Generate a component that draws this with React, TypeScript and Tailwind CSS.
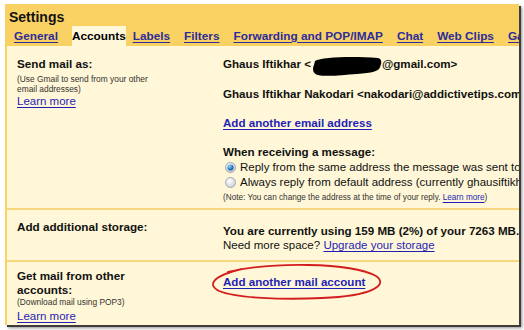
import React from "react";

function Radio({ checked }: { checked?: boolean }) {
  return (
    <svg width="11" height="11" viewBox="0 0 11 11" className="ml-[2px] mr-[4px] shrink-0">
      <defs>
        <radialGradient id={checked ? "rgc" : "rgu"} cx="0.4" cy="0.35" r="0.7">
          <stop offset="0" stopColor="#ffffff" />
          <stop offset="1" stopColor="#c9cdd2" />
        </radialGradient>
        <radialGradient id="dot" cx="0.35" cy="0.3" r="0.75">
          <stop offset="0" stopColor="#9fd2f5" />
          <stop offset="0.6" stopColor="#2f7fc6" />
          <stop offset="1" stopColor="#1a4f8c" />
        </radialGradient>
      </defs>
      <circle cx="5.5" cy="5.5" r="5" fill={`url(#${checked ? "rgc" : "rgu"})`} stroke="#98a3b0" strokeWidth="0.9" />
      {checked && <circle cx="5.5" cy="5.5" r="3.1" fill="url(#dot)" />}
    </svg>
  );
}

function Blob() {
  return (
    <svg width="70" height="14" viewBox="0 0 70 14" className="inline-block overflow-visible align-top ml-[1px]">
      <path
        d="M3 4 C10 0, 40 -1, 66 1 C70 2, 70 6, 68 10 C67 14, 60 16, 45 17 C30 18, 15 20, 6 18 C1 17, 0 12, 2 8 Z"
        fill="#000"
      />
    </svg>
  );
}

export default function App() {
  const tab = "px-[7px] text-[#2c2c9c] underline underline-offset-[2px]";
  const link = "text-[#1f1fb8] underline underline-offset-[2px]";
  return (
    <div className="relative w-[524px] h-[330px] bg-white overflow-hidden font-['Liberation_Sans',Arial,sans-serif] text-[#111] pt-[4px] pl-[5px]">
      <div className="w-[514px] h-[321px] bg-[#fad163] flex flex-col overflow-hidden shadow-[2px_2px_0_#3c3c3c,3px_3px_3px_rgba(0,0,0,0.45)]">
        <div className="pl-[4px] pt-[5px] h-[22px] text-[14px] leading-[16px] font-bold">Settings</div>
        <div className="flex h-[20px] text-[11.8px] leading-[20px] font-bold whitespace-nowrap pl-[2px]">
          <span className={tab}>General</span>
          <span className="ml-[7px] w-[64px] bg-[#fff7d7] text-center text-black">Accounts</span>
          <span className={tab}>Labels</span>
          <span className={tab}>Filters</span>
          <span className={tab}>Forwarding and POP/IMAP</span>
          <span className={tab}>Chat</span>
          <span className={tab}>Web Clips</span>
          <span className={tab}>Gadgets</span>
        </div>
        <div className="flex-1 ml-[2px] bg-[#fff7d7] flex flex-col">
          {/* Row 1 */}
          <div className="h-[164px] flex border-b-2 border-[#f7d67e]">
            <div className="w-[216px] shrink-0 pl-[10px] pt-[11px]">
              <div className="text-[11.7px] leading-[14px] font-bold">Send mail as:</div>
              <div className="mt-[3px] text-[8.4px] leading-[10px] text-[#333] whitespace-nowrap">
                (Use Gmail to send from your other
                <br />
                email addresses)
              </div>
              <div className="text-[11.5px] leading-[14px]">
                <span className={link}>Learn more</span>
              </div>
            </div>
            <div className="flex-1 min-w-0 pt-[11px] whitespace-nowrap">
              <div className="text-[11.6px] leading-[14px] font-bold">
                Ghaus Iftikhar &lt;
                <Blob />
                @gmail.com&gt;
              </div>
              <div className="mt-[16px] text-[11.6px] leading-[14px] font-bold">
                Ghaus Iftikhar Nakodari &lt;nakodari@addictivetips.com&gt;
              </div>
              <div className="mt-[15px] text-[11.6px] leading-[14px] font-bold">
                <span className={link}>Add another email address</span>
              </div>
              <div className="mt-[15px] text-[11.6px] leading-[14px] font-bold">When receiving a message:</div>
              <div className="mt-[0.5px] flex items-center h-[15px] text-[11.5px] leading-[15px]">
                <Radio checked />
                <span>Reply from the same address the message was sent to</span>
              </div>
              <div className="flex items-center h-[15px] text-[11.5px] leading-[15px]">
                <Radio />
                <span>Always reply from default address (currently ghausiftikhar@gmail.com)</span>
              </div>
              <div className="mt-[3.5px] text-[8.2px] leading-[10px] text-[#333]">
                (Note: You can change the address at the time of your reply.{" "}
                <span className={link}>Learn more</span>)
              </div>
            </div>
          </div>
          {/* Row 2 */}
          <div className="h-[52px] flex border-b-2 border-[#f7d67e]">
            <div className="w-[216px] shrink-0 pl-[10px] pt-[10px]">
              <div className="text-[11.7px] leading-[14px] font-bold whitespace-nowrap">Add additional storage:</div>
            </div>
            <div className="flex-1 min-w-0 pt-[14px] whitespace-nowrap">
              <div className="text-[11.6px] leading-[14px] font-bold">
                You are currently using 159 MB (2%) of your 7263 MB.
              </div>
              <div className="text-[11.5px] leading-[14px]">
                Need more space? <span className={link}>Upgrade your storage</span>
              </div>
            </div>
          </div>
          {/* Row 3 */}
          <div className="flex-1 flex">
            <div className="w-[216px] shrink-0 pl-[10px] pt-[7px]">
              <div className="text-[11.7px] leading-[14px] font-bold whitespace-nowrap">
                Get mail from other
                <br />
                accounts:
              </div>
              <div className="text-[8.4px] leading-[10px] text-[#333] whitespace-nowrap">(Download mail using POP3)</div>
              <div className="mt-[2px] text-[11.5px] leading-[14px]">
                <span className={link}>Learn more</span>
              </div>
            </div>
            <div className="flex-1 min-w-0 pt-[13px] whitespace-nowrap">
              <div className="text-[11.6px] leading-[14px] font-bold">
                <span className={link}>Add another mail account</span>
              </div>
            </div>
          </div>
        </div>
      </div>
      <svg
        className="absolute left-0 top-0 pointer-events-none"
        width="524"
        height="330"
        viewBox="0 0 524 330"
      >
        <path
          d="M228 272 C270 262, 350 262, 376 276 C389 285, 372 296, 322 298 C282 300, 236 298, 219 291 C207 285, 212 276, 242 269"
          fill="none"
          stroke="#d41e1e"
          strokeWidth="1.8"
          strokeLinecap="round"
        />
      </svg>
    </div>
  );
}
